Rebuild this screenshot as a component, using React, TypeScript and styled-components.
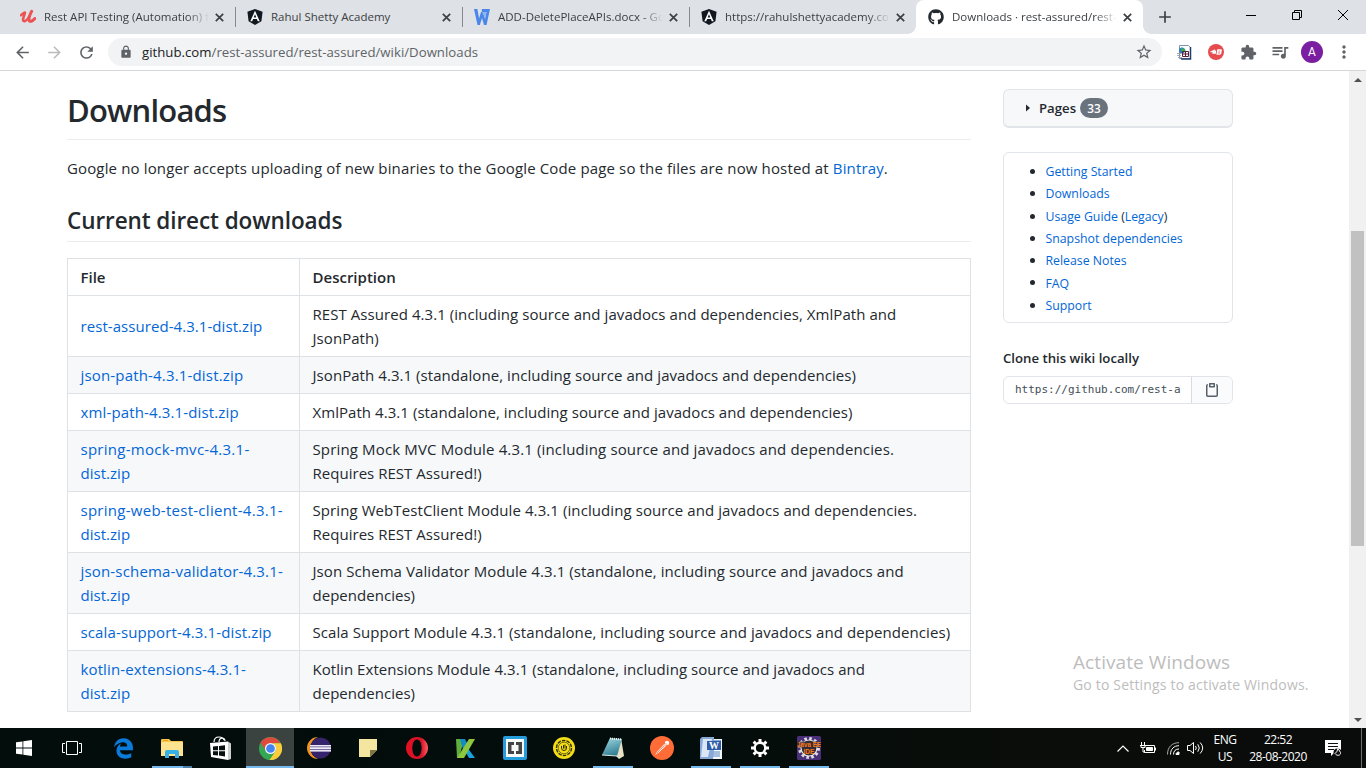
import React from 'react';
import styled, { createGlobalStyle } from 'styled-components';
import { FaGithub, FaEdgeLegacy } from 'react-icons/fa';
import {
  MdArrowBack, MdArrowForward, MdRefresh, MdLock, MdStarBorder, MdExtension,
  MdQueueMusic, MdMoreVert, MdAdd,
} from 'react-icons/md';

const Global = createGlobalStyle`
  * { box-sizing: border-box; }
  html, body { margin: 0; padding: 0; overflow: hidden; }
  body { font-family: "Open Sans", "Noto Sans", sans-serif; color: #24292e; background: #fff; }
  a { color: #0366d6; text-decoration: none; }
  svg { display: block; flex: none; }
`;

const Screen = styled.div`
  width: 1366px; height: 768px; position: relative; overflow: hidden;
  display: flex; flex-direction: column; background: #fff;
`;

/* ---------- browser chrome ---------- */
const TabStrip = styled.div`
  height: 34px; flex: none; background: #dee1e6; display: flex; padding-left: 8px;
`;
const Tab = styled.div<{ $active?: boolean; $divider?: boolean }>`
  width: 227px; height: 34px; flex: none; position: relative;
  display: flex; align-items: center; padding: 0 9px 0 12px;
  background: ${p => (p.$active ? '#fff' : 'transparent')};
  border-radius: 8px 8px 0 0;
  ${p => p.$divider && `&::after { content: ''; position: absolute; right: -1px; top: 7px; width: 1px; height: 20px; background: #868a90; }`}
  ${p => p.$active && `
    &::before, &::after { content: ''; position: absolute; bottom: 0; width: 8px; height: 8px; }
    &::before { left: -8px; background: radial-gradient(circle at 0 0, transparent 7.5px, #fff 8px); }
    &::after { right: -8px; background: radial-gradient(circle at 100% 0, transparent 7.5px, #fff 8px); }
  `}
`;
const TabTitle = styled.div<{ $fade?: boolean; $ls?: number }>`
  width: 165px; margin-left: 8px; font-size: 11.5px; line-height: 16px; color: #3c4043;
  letter-spacing: ${p => p.$ls ?? 0}px; white-space: nowrap;
  ${p => p.$fade && 'mask-image: linear-gradient(90deg, #000 143px, transparent 165px);'}
`;
const TabClose = styled.div`
  margin-left: auto; width: 14px; color: #3c4043; display: flex; justify-content: center;
`;
const NewTab = styled.div`
  width: 44px; display: flex; align-items: center; justify-content: center; color: #3c4043;
`;
const WindowButtons = styled.div`
  margin-left: auto; display: flex; height: 29px;
`;
const WindowButton = styled.div`
  width: 46px; display: flex; align-items: center; justify-content: center;
`;
const Toolbar = styled.div`
  height: 37px; flex: none; display: flex; align-items: center; background: #fff;
  border-bottom: 1px solid #d5d6d8; padding-left: 13px; color: #5f6368;
`;
const NavButton = styled.div<{ $dim?: boolean }>`
  width: 32px; color: ${p => (p.$dim ? '#babcbe' : '#5f6368')};
`;
const AddressBar = styled.div`
  width: 1054px; height: 28px; margin-left: -1px; border-radius: 14px; background: #f1f3f4;
  display: flex; align-items: center; padding: 0 9px 0 11px;
`;
const Url = styled.div`
  margin-left: 9px; font-size: 13.2px; line-height: 20px; color: #5f6368; flex: 1;
  letter-spacing: 0.02px;
  b { font-weight: 400; color: #202124; }
`;
const Extensions = styled.div`
  flex: 1; display: grid; grid-template-columns: repeat(6, 32px); place-items: center; align-items: center; padding-left: 6px;
`;
const Avatar = styled.div`
  width: 22px; height: 22px; border-radius: 50%; background: #7b1fa2; color: #fff;
  font: 12px/22px Roboto, sans-serif; text-align: center;
`;

/* ---------- page ---------- */
const Viewport = styled.div`
  height: 657px; flex: none; display: flex; overflow: hidden;
`;
const Main = styled.main`
  width: 904px; margin-left: 67px; flex: none;
`;
const Title = styled.h1`
  margin: 0; height: 69px; padding-top: 19px; border-bottom: 1px solid #eaecef;
  font-size: 31px; line-height: 40px; font-weight: 600; letter-spacing: -0.8px;
`;
const Intro = styled.p`
  margin: 16px 0 24px; font-size: 15px; line-height: 24px; letter-spacing: 0.14px; white-space: nowrap;
`;
const Subtitle = styled.h2`
  margin: 0 0 16px; height: 38px; padding-top: 2px; border-bottom: 1px solid #eaecef;
  font-size: 22.5px; line-height: 30px; font-weight: 600; letter-spacing: -0.08px;
`;
const Table = styled.table`
  width: 904px; table-layout: fixed; border-collapse: collapse; font-size: 15px; line-height: 24px;
  th, td { border: 1px solid #dfe2e5; padding: 6px 12.5px; text-align: left; white-space: nowrap; }
  th { font-weight: 600; font-size: 15px; }
  tbody tr:nth-child(2n) { background: #f6f8fa; }
`;
const Line = styled.div<{ $ls?: number }>`
  height: 24px; letter-spacing: ${p => p.$ls ?? 0}px;
`;
const Sidebar = styled.aside`
  width: 230px; margin-left: 32px; padding-top: 18px; flex: none;
`;
const PagesBox = styled.div`
  height: 39px; border: 1px solid #e1e4e8; border-bottom-width: 2px; border-radius: 6px;
  background: #f6f8fa; display: flex; align-items: center; padding-left: 22px;
  font-size: 13.2px; font-weight: 600;
`;
const Counter = styled.span`
  margin-left: 4px; width: 28px; height: 20px; border-radius: 10px; background: #6a737d; color: #fff;
  font-size: 11.8px; line-height: 20px; text-align: center; font-weight: 600;
`;
const Contents = styled.ul`
  margin: 24px 0 0; height: 171px; border: 1px solid #e1e4e8; border-radius: 6px;
  padding: 8px 0 0 41.5px; font-size: 12.3px; list-style: none;
`;
const ContentItem = styled.li`
  height: 22.3px; line-height: 22px; display: flex; align-items: center; position: relative;
  white-space: pre;
  &::before { content: ''; position: absolute; left: -15.5px; top: 8px; width: 5px; height: 5px; border-radius: 50%; background: #24292e; }
`;
const CloneTitle = styled.div`
  margin-top: 25px; font-size: 13.2px; line-height: 21px; font-weight: 600;
`;
const CloneField = styled.div`
  margin-top: 7px; height: 28px; border: 1px solid #e1e4e8; border-radius: 6px; display: flex; overflow: hidden;
`;
const CloneUrl = styled.div`
  width: 187px; padding: 0 11px; font: 11px/26px "DejaVu Sans Mono", monospace;
  color: #444d56; white-space: nowrap; overflow: hidden;
`;
const CopyButton = styled.div`
  flex: 1; background: #fafbfc; border-left: 1px solid #d8dbdf; color: #586069;
  display: flex; align-items: center; justify-content: center;
`;
const Scrollbar = styled.div`
  width: 17px; margin-left: auto; background: #f1f1f1; display: flex; flex-direction: column; align-items: center;
  padding: 7px 0 6px;
`;
const Thumb = styled.div`
  width: 13px; height: 315px; margin-top: 149px; background: #c1c1c1;
`;
const Arrow = styled.div<{ $down?: boolean }>`
  border: 4px solid transparent; border-${p => (p.$down ? 'top' : 'bottom')}-color: #505050;
  border-${p => (p.$down ? 'bottom' : 'top')}-width: 0;
  ${p => p.$down && 'margin-top: auto;'}
`;
const Watermark = styled.div`
  position: absolute; left: 1073px; top: 650px; color: #bdbdbd; white-space: nowrap;
  font-size: 14px; line-height: 20px; letter-spacing: 0.18px;
`;
const WatermarkTitle = styled.div`font-size: 19px; line-height: 25px; letter-spacing: 0.08px;`;

/* ---------- taskbar ---------- */
const Taskbar = styled.div`
  height: 40px; flex: none; background: linear-gradient(90deg, #020d0c, #030d0b 50%, #0a0d0a 75%, #0a0b0b); display: flex; color: #fff;
`;
const SystemButton = styled.div`
  width: 48px; display: flex; align-items: center; justify-content: center;
  & + & { margin-right: 2px; }
`;
const TaskButton = styled.div<{ $active?: boolean; $open?: boolean; $stack?: boolean }>`
  width: 48px; margin-left: 1px; height: 40px; position: relative;
  display: flex; align-items: center; justify-content: center;
  background: ${p => (p.$active ? '#3b4341' : 'transparent')};
  &::after {
    content: ''; position: absolute; bottom: 0; height: 2px;
    left: ${p => (p.$active ? 0 : 4)}px; right: ${p => (p.$active ? 0 : 4)}px;
    background: ${p => (p.$stack ? 'linear-gradient(90deg,#76b9ed 31px,#4e7ea3 31px)' : p.$active || p.$open ? '#76b9ed' : 'transparent')};
  }
`;
const Tray = styled.div`
  margin-left: auto; display: flex; align-items: center; font-size: 12px; line-height: 17px; text-align: center;
`;
const TrayIcon = styled.div<{ $w: number }>`
  width: ${p => p.$w}px; display: flex; justify-content: center;
`;
const Notifications = styled(TrayIcon)`padding-right: 5px;`;
const TrayText = styled.div<{ $w: number; $ls?: number }>`
  width: ${p => p.$w}px; letter-spacing: ${p => p.$ls ?? -0.5}px; white-space: nowrap;
`;
const DesktopEdge = styled.div`
  width: 5px; height: 40px; border-left: 1px solid #6b6c6c;
`;

/* ---------- drawings ---------- */
const CloseX = () => (
  <svg width="9" height="9" viewBox="0 0 9 9" stroke="currentColor" strokeWidth="1.7"><path d="M.8.8l7.4 7.4M8.200.8L.8 8.200" /></svg>
);
const Udemy = () => (
  <svg width="16" height="16" viewBox="0 0 16 16" fill="none" stroke="#ec5252" strokeLinecap="round" strokeLinejoin="round">
    <path d="M1 6.2C2.4 5 3.8 3.6 4.7 3.4 5.8 3.5 3 8 3 10.7c0 2.5 3.5 2 6.3-3.2" strokeWidth="2.5" />
    <path d="M11.6 2.4C10 5.5 8.6 8.5 8.9 11c.4 2.2 3.4 1.5 6-1.5" strokeWidth="3" />
  </svg>
);
const Angular = () => (
  <svg width="16" height="16" viewBox="0 0 16 16">
    <path d="M8 0l7.600 2.700-1.200 9.600L8 16l-6.400-3.700L.4 2.700z" fill="#111820" />
    <path fillRule="evenodd" d="M8 1.800L3.300 12.200h1.900l.9-2.300h3.800l.9 2.300h1.900zM8 5.200l1.300 3.200H6.700z" fill="#fff" />
  </svg>
);
const WpsWriter = () => (
  <svg width="16" height="16" viewBox="0 0 16 16">
    <path d="M0 0h3.400l1.700 9.500L7 3h2l2 7 1.500-7H7.800V0H16l-3.500 16H10L8 9l-2.200 7H3.500z" fill="#4a87e8" />
    <path d="M8 3h4.500L11 9z" fill="#8cb4f3" />
  </svg>
);
const Shot = () => (
  <svg width="15" height="16" viewBox="0 0 15 16">
    <path d="M2.500 1.500h9l2 2v11h-11z" fill="#fff" stroke="#7c93b4" />
    <path d="M13.500 3v12H4" fill="none" stroke="#1f3d6e" strokeWidth="1.500" />
    <circle cx="5" cy="6.500" r="3" fill="#3a77c9" /><path d="M4 3.500l5 2.500-4 3z" fill="#30b54a" />
    <path d="M5.500 7.500h6v5h-6zM8.500 7.500v5M5.500 10h6" fill="none" stroke="#5b2038" />
    <path d="M0 9.500h4M0 11.500h4M1 13.500h4" stroke="#8a99a0" strokeWidth=".8" />
  </svg>
);
const BlazeMeter = () => (
  <svg width="16" height="16" viewBox="0 0 16 16">
    <circle cx="8" cy="8" r="8" fill="#e54b4f" />
    <path d="M1.500 8l5.500-2.800-.3 1.300h1.500l-.5 3.500-4-.4 1.300-1z" fill="#fff" />
    <path fillRule="evenodd" d="M9.300 5.300h4q1.200.7.3 2.500 0 2.500-1.500 2.900H8.400zM10.700 6.700l-.1.7h1.500v-.7zM10.300 8.600l-.1.800h1.600v-.8z" fill="#fff" />
  </svg>
);
const Clippy = () => (
  <svg width="16" height="16" viewBox="0 0 16 16" fill="currentColor">
    <path fillRule="evenodd" d="M5.75 1a.75.75 0 00-.75.75v3c0 .414.336.75.75.75h4.500a.75.75 0 00.75-.75v-3a.75.75 0 00-.75-.75h-4.500zm.75 3V2.500h3V4h-3zm-2.874-.467a.75.75 0 00-.752-1.298A1.750 1.750 0 002 3.750v9.500c0 .966.784 1.750 1.750 1.750h8.500A1.750 1.750 0 0014 13.250v-9.500a1.750 1.750 0 00-.874-1.515.75.75 0 10-.752 1.298.25.25 0 01.126.217v9.500a.25.25 0 01-.25.25h-8.500a.25.25 0 01-.25-.25v-9.500a.25.25 0 01.126-.217z" />
  </svg>
);
const WinLogo = () => (
  <svg width="16" height="16" viewBox="0 0 16 16" fill="#fff">
    <path d="M0 2.300l6.500-.9v6.200H0zM7.300 1.300L16 0v7.600H7.300zM0 8.400h6.500v6.200L0 13.700zM7.300 8.400H16V16l-8.700-1.300z" />
  </svg>
);
const TaskView = () => (
  <svg width="20" height="14" viewBox="0 0 20 14" fill="none" stroke="#fff">
    <path d="M4.500.5h11v13h-11zM3 2.500H.5v9H3M17 2.500h2.500v9H17" />
  </svg>
);
const Explorer = () => (
  <svg width="22" height="19" viewBox="0 0 22 19">
    <path d="M0 1q0-1 1-1h7l2 2h11q1 0 1 1v14H0z" fill="#f5c64c" />
    <path d="M1 3h21v14H0V4z" fill="#fde38f" /><path d="M2 1h5v1H2z" fill="#f0a020" />
    <path d="M4 19v-6q0-2 2-2h10q2 0 2 2v6h-4v-4H8v4z" fill="#36b0e5" />
  </svg>
);
const Store = () => (
  <svg width="22" height="24" viewBox="0 0 22 24">
    <path d="M4 6C4 1 7 1 9 1s4 0 5 3M9 6c0-5 6-5 6-1" fill="none" stroke="#fff" strokeWidth="1.200" />
    <path d="M0 7l18-1.500V24L1 21z" fill="#fff" /><path d="M18 5.500l3 2V23l-3 1z" fill="#ccd0d0" />
    <path d="M3 10.500l5-.5v4.300H3zM9 9.900l6-.6v5H9zM3 15.200h5v4.300l-5-.6zM9 15.200h6v5.300l-6-.9z" fill="#06110f" />
  </svg>
);
const Chrome = () => (
  <svg width="23" height="23" viewBox="0 0 24 24">
    <circle cx="12" cy="12" r="12" fill="#33a852" />
    <path d="M1.600 6A12 12 0 0 1 22.400 6.500L12 6.500 7 14.500z" fill="#e04a3e" />
    <path d="M22.700 6.500A12 12 0 0 1 11 24l6-9q2-5-3-8.500z" fill="#fccd3b" />
    <circle cx="12" cy="12" r="5.800" fill="#f5f5f5" /><circle cx="12" cy="12" r="4.500" fill="#4384f3" />
  </svg>
);
const Eclipse = () => (
  <svg width="24" height="22" viewBox="0 0 24 22">
    <path d="M11 0A11 11 0 0 0 11 22A12 12 0 0 1 11 0" fill="#f0941e" />
    <circle cx="13.500" cy="11" r="10.500" fill="#35246b" />
    <path d="M3 8h21v6.500H3z" fill="#c6c0dc" /><path d="M3 9.700h21M3 12.700h21" stroke="#4c3c7d" strokeWidth=".8" />
    <path d="M3 8.800h21M3 11.200h21M3 13.800h21" stroke="#fff" />
  </svg>
);
const Sticky = () => (
  <svg width="18" height="18" viewBox="0 0 18 18">
    <path d="M0 0h18v11l-7 7H0z" fill="#f4e6a0" /><path d="M11 18v-7h7z" fill="#7d7544" />
  </svg>
);
const Opera = () => (
  <svg width="22" height="22" viewBox="0 0 22 22">
    <defs><linearGradient id="op" x2="1"><stop stopColor="#e30f24" /><stop offset=".7" stopColor="#d51428" /><stop offset="1" stopColor="#fa6062" /></linearGradient></defs>
    <path fillRule="evenodd" fill="url(#op)" d="M11 0a11 11 0 1 1 0 22a11 11 0 1 1 0-22zM11 2.500C4.800 2.500 4.800 19.500 11 19.500s6.200-17 0-17z" />
  </svg>
);
const Katalon = () => (
  <svg width="20" height="20" viewBox="0 0 20 20">
    <path d="M0 1h6v8l-3 11H1z" fill="#5fae3e" />
    <path d="M4 1h5l3 6-4 8z" fill="#128bc6" /><path d="M11 9l8 11h-6l-4-7z" fill="#18a3dc" />
    <path d="M13 1h6L8 20H1z" fill="#8dc63f" />
  </svg>
);
const Brackets = () => (
  <svg width="24" height="24" viewBox="0 0 24 24">
    <rect width="24" height="24" rx="2" fill="#259cdc" /><path d="M3 3h18v18H3z" fill="#f7f8f8" />
    <path d="M5 6h6v3H8.500v6H11v3H5zM19 6h-6v3h2.500v6H13v3h6z" fill="#444" />
  </svg>
);
const YellowSeal = () => (
  <svg width="22" height="22" viewBox="0 0 22 22" fill="none" stroke="#33330e">
    <circle cx="11" cy="11" r="11" fill="#f4dc16" stroke="none" />
    <circle cx="11" cy="11" r="7.500" strokeWidth="1.400" strokeDasharray="3.600 1.100" />
    <circle cx="11" cy="11" r="5.800" strokeWidth=".6" />
    <path d="M8.500 9v2q0 2.500 2.500 2.500t2.500-2.500V9M10.500 8v3.500M12 7.500v4" strokeWidth="1" />
  </svg>
);
const Notepad = () => (
  <svg width="23" height="22" viewBox="0 0 23 22">
    <defs><linearGradient id="np" y2="1" x2=".4"><stop stopColor="#a5dce4" /><stop offset="1" stopColor="#347f95" /></linearGradient></defs>
    <path d="M19 1l3 18-5 3-3-3z" fill="#e6e1c6" /><path d="M8 1l12 1-5 17-15-1z" fill="url(#np)" />
    <path d="M8 1.500l12 1" stroke="#edf6ef" strokeWidth="2" strokeDasharray="1 1" /><path d="M0 18l15 1 3 2" stroke="#d8e7dd" fill="none" />
  </svg>
);
const Postman = () => (
  <svg width="24" height="24" viewBox="0 0 24 24">
    <circle cx="12" cy="12" r="12" fill="#ff6c37" />
    <circle cx="17" cy="7" r="2.200" fill="#fff" /><path d="M14.300 8l1.700 1.700-7.200 6.800L5 19l2.200-3.500z" fill="#fff" />
    <path d="M14.500 9.300l-8 8M16 7.500l1 1" stroke="#d95b31" strokeWidth=".8" />
  </svg>
);
const Word = () => (
  <svg width="24" height="23" viewBox="0 0 24 23">
    <path d="M8 2h15v20H7z" fill="#f2f6fb" /><path d="M9 15h12M9 17h12M9 19h12" stroke="#5d86bf" />
    <path d="M3 0h12v3h7v10H15l-1 9H1V2z" fill="#87a9d8" /><path d="M4 2h9L9 20H2z" fill="#dce7f5" />
    <path d="M8 4h14v9H8z" fill="#2e5ea8" />
    <text x="10" y="12" fontSize="10" fontWeight="700" fontFamily="Liberation Serif" fill="#fff">W</text>
  </svg>
);
const Gear = () => (
  <svg width="18" height="18" viewBox="0 0 18 18" fill="none" stroke="#fff">
    <circle cx="9" cy="9" r="5.300" strokeWidth="2.400" />
    <path d="M9 0v3M9 15v3M0 9h3M15 9h3M2.640 2.640l2.100 2.100M13.260 13.260l2.100 2.100M2.640 15.360l2.100-2.100M13.260 4.740l2.100-2.100" strokeWidth="3" />
  </svg>
);
const JavaEE = () => (
  <svg width="24" height="24" viewBox="0 0 24 24">
    <rect width="24" height="24" rx="1.500" fill="#493078" />
    <circle cx="12" cy="12" r="9.500" fill="none" stroke="#ddd" strokeWidth="3" strokeDasharray="2.600 2.370" />
    <circle cx="12" cy="12" r="8" fill="#352b35" stroke="#eee" strokeWidth="1.200" />
    <path d="M0 5.500h24v6H0z" fill="#352b35" opacity=".75" />
    <g fontFamily="Liberation Sans" fontWeight="700" fill="#ff7b14">
      <text x="0" y="11" fontSize="7.500" textLength="24" lengthAdjust="spacingAndGlyphs">Java EE</text>
      <text x="6.500" y="18" fontSize="8" textLength="11" lengthAdjust="spacingAndGlyphs">IDE</text>
    </g>
  </svg>
);
const Battery = () => (
  <svg width="16" height="12" viewBox="0 0 16 12" fill="none" stroke="#fff">
    <path d="M5 3.500h9.500v7h-10V8M15.500 5.500v3M1.500 0v3M4.500 0v3M0 3.500h5.500M1 3v2.500h4V3M3 6v4h2" /><path d="M6.500 5.500h6v3h-6z" fill="#fff" />
  </svg>
);
const Wifi = () => (
  <svg width="13" height="13" viewBox="0 0 13 13" fill="none" stroke="#fff">
    <path d="M.5 12.500C.5 5 5 .7 12 .7" stroke="#aaa" /><path d="M3.500 12.500C3.500 7 7 3.700 12 3.700M6.500 12.500c0-3.500 2-5.500 5.500-5.500" /><path d="M9 12.500c0-1.500 1-2.500 3-2.500v2.500z" fill="#fff" />
  </svg>
);
const Volume = () => (
  <svg width="17" height="14" viewBox="0 0 17 14" fill="none" stroke="#fff">
    <path d="M.5 4.500h2.500L6.500 1.500v11L3 9.500H.5zM8.500 5q1.500 2 0 4M10.800 3.300q3 3.700 0 7.400M13.200 1.500q5 5.500 0 11" />
  </svg>
);
const ActionCenter = () => (
  <svg width="17" height="17" viewBox="0 0 17 17">
    <path d="M0 0h16v13H9l-3 3v-3H0z" fill="#fff" /><path d="M3 3.500h10M3 6.500h10M3 9.500h6" stroke="#111" />
    <circle cx="12.500" cy="12.500" r="4" fill="#111" /><path d="M13 8.500q-1 4-3 5c2 3 6 2 5.500-1z" stroke="#fff" fill="none" />
  </svg>
);

/* ---------- data ---------- */
type Text = [string, number?];
const rows: { file: Text[]; desc: Text[] }[] = [
  { file: [['rest-assured-4.3.1-dist.zip', 0.06]], desc: [['REST Assured 4.3.1 (including source and javadocs and dependencies, XmlPath and', 0.063], ['JsonPath)', 0.06]] },
  { file: [['json-path-4.3.1-dist.zip', 0.17]], desc: [['JsonPath 4.3.1 (standalone, including source and javadocs and dependencies)', 0.06]] },
  { file: [['xml-path-4.3.1-dist.zip', 0.14]], desc: [['XmlPath 4.3.1 (standalone, including source and javadocs and dependencies)', 0.055]] },
  { file: [['spring-mock-mvc-4.3.1-', 0.27], ['dist.zip', 0.03]], desc: [['Spring Mock MVC Module 4.3.1 (including source and javadocs and dependencies.', 0.145], ['Requires REST Assured!)', 0.03]] },
  { file: [['spring-web-test-client-4.3.1-', 0.27], ['dist.zip', 0.03]], desc: [['Spring WebTestClient Module 4.3.1 (including source and javadocs and dependencies.', 0.085], ['Requires REST Assured!)', 0.03]] },
  { file: [['json-schema-validator-4.3.1-', 0.17], ['dist.zip', 0.03]], desc: [['Json Schema Validator Module 4.3.1 (standalone, including source and javadocs and', 0.09], ['dependencies)', 0.03]] },
  { file: [['scala-support-4.3.1-dist.zip', 0.13]], desc: [['Scala Support Module 4.3.1 (standalone, including source and javadocs and dependencies)', 0.08]] },
  { file: [['kotlin-extensions-4.3.1-', 0.12], ['dist.zip', 0.03]], desc: [['Kotlin Extensions Module 4.3.1 (standalone, including source and javadocs and', 0.055], ['dependencies)', 0.03]] },
];

const tabs = [
  { icon: <Udemy />, title: 'Rest API Testing (Automation) f', fade: true, divider: true },
  { icon: <Angular />, title: 'Rahul Shetty Academy', divider: true },
  { icon: <WpsWriter />, title: 'ADD-DeletePlaceAPIs.docx - Go', fade: true, divider: true },
  { icon: <Angular />, title: 'https://rahulshettyacademy.co', fade: true },
  { icon: <FaGithub size={16} color="#24292e" />, title: 'Downloads · rest-assured/rest-', fade: true, active: true },
];

export default function App() {
  return (
    <Screen>
      <Global />
      <TabStrip>
        {tabs.map(t => (
          <Tab key={t.title} $active={t.active} $divider={t.divider}>
            {t.icon}
            <TabTitle $fade={t.fade}>{t.title}</TabTitle>
            <TabClose><CloseX /></TabClose>
          </Tab>
        ))}
        <NewTab><MdAdd size={20} /></NewTab>
        <WindowButtons>
          <WindowButton><svg width="10" height="10"><path d="M0 5.500h10" stroke="#000" /></svg></WindowButton>
          <WindowButton><svg width="10" height="10" fill="none" stroke="#000"><path d="M.5 2.500h7v7h-7zM2.500 2.500v-2h7v7h-2" /></svg></WindowButton>
          <WindowButton><svg width="10" height="10" stroke="#000"><path d="M0 0l10 10M10 0L0 10" /></svg></WindowButton>
        </WindowButtons>
      </TabStrip>
      <Toolbar>
        <NavButton><MdArrowBack size={19} /></NavButton>
        <NavButton $dim><MdArrowForward size={19} /></NavButton>
        <NavButton><MdRefresh size={19} /></NavButton>
        <AddressBar>
          <MdLock size={14} />
          <Url><b>github.com</b>/rest-assured/rest-assured/wiki/Downloads</Url>
          <MdStarBorder size={18} />
        </AddressBar>
        <Extensions>
          <Shot /><BlazeMeter /><MdExtension size={17} /><MdQueueMusic size={20} /><Avatar>A</Avatar><MdMoreVert size={20} />
        </Extensions>
      </Toolbar>

      <Viewport>
        <Main>
          <Title>Downloads</Title>
          <Intro>Google no longer accepts uploading of new binaries to the Google Code page so the files are now hosted at <a>Bintray</a>.</Intro>
          <Subtitle>Current direct downloads</Subtitle>
          <Table>
            <colgroup><col width="232" /><col /></colgroup>
            <thead><tr><th>File</th><th>Description</th></tr></thead>
            <tbody>
              {rows.map(r => (
                <tr key={r.file[0][0]}>
                  <td><a>{r.file.map(([t, ls]) => <Line key={t} $ls={ls}>{t}</Line>)}</a></td>
                  <td>{r.desc.map(([t, ls]) => <Line key={t} $ls={ls}>{t}</Line>)}</td>
                </tr>
              ))}
            </tbody>
          </Table>
        </Main>
        <Sidebar>
          <PagesBox>
            <svg width="13" height="8" viewBox="0 0 13 8"><path d="M0 0.500l4 3.500-4 3.500z" fill="#24292e" /></svg>
            Pages<Counter>33</Counter>
          </PagesBox>
          <Contents>
            <ContentItem><a>Getting Started</a></ContentItem>
            <ContentItem><a>Downloads</a></ContentItem>
            <ContentItem><a>Usage Guide</a> (<a>Legacy</a>)</ContentItem>
            <ContentItem><a>Snapshot dependencies</a></ContentItem>
            <ContentItem><a>Release Notes</a></ContentItem>
            <ContentItem><a>FAQ</a></ContentItem>
            <ContentItem><a>Support</a></ContentItem>
          </Contents>
          <CloneTitle>Clone this wiki locally</CloneTitle>
          <CloneField>
            <CloneUrl>https://github.com/rest-a</CloneUrl>
            <CopyButton><Clippy /></CopyButton>
          </CloneField>
        </Sidebar>
        <Scrollbar><Arrow /><Thumb /><Arrow $down /></Scrollbar>
      </Viewport>

      <Taskbar>
        <SystemButton><WinLogo /></SystemButton>
        <SystemButton><TaskView /></SystemButton>
        <TaskButton><FaEdgeLegacy size={21} color="#0b7bdb" /></TaskButton>
        <TaskButton $open $stack><Explorer /></TaskButton>
        <TaskButton><Store /></TaskButton>
        <TaskButton $active><Chrome /></TaskButton>
        <TaskButton><Eclipse /></TaskButton>
        <TaskButton><Sticky /></TaskButton>
        <TaskButton><Opera /></TaskButton>
        <TaskButton><Katalon /></TaskButton>
        <TaskButton><Brackets /></TaskButton>
        <TaskButton><YellowSeal /></TaskButton>
        <TaskButton $open><Notepad /></TaskButton>
        <TaskButton><Postman /></TaskButton>
        <TaskButton $open><Word /></TaskButton>
        <TaskButton $open><Gear /></TaskButton>
        <TaskButton $open><JavaEE /></TaskButton>
        <Tray>
          <TrayIcon $w={24}><svg width="12" height="7" fill="none" stroke="#fff" strokeWidth="1.200"><path d="M.5 6.500L6 1l5.500 5.500" /></svg></TrayIcon>
          <TrayIcon $w={25}><Battery /></TrayIcon>
          <TrayIcon $w={26}><Wifi /></TrayIcon>
          <TrayIcon $w={18}><Volume /></TrayIcon>
          <TrayText $w={42}>ENG<br />US</TrayText>
          <TrayText $w={64}>22:52<br />28-08-2020</TrayText>
          <Notifications $w={51}><ActionCenter /></Notifications>
          <DesktopEdge />
        </Tray>
      </Taskbar>
      <Watermark><WatermarkTitle>Activate Windows</WatermarkTitle>Go to Settings to activate Windows.</Watermark>
    </Screen>
  );
}
